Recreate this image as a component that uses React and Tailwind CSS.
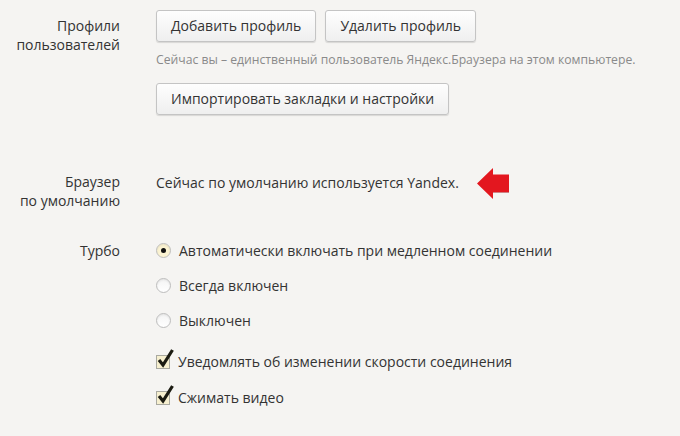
import React from "react";

const font = { fontFamily: '"Open Sans", "Noto Sans", sans-serif' };

function Btn({ children }) {
  return (
    <button className="h-[32px] px-[14px] rounded-[3px] border border-[#c4c4c4] bg-gradient-to-b from-[#fefefe] to-[#efefef] shadow-[0_1px_1px_rgba(0,0,0,0.12)] text-[14px] text-[#333] leading-none">
      {children}
    </button>
  );
}

function Radio({ checked }) {
  return (
    <span
      className={
        "w-[15px] h-[15px] rounded-full border border-[#bdbdbd] flex items-center justify-center shrink-0 shadow-[inset_0_1px_2px_rgba(0,0,0,0.08)] " +
        (checked ? "bg-[#fbf3d2]" : "bg-gradient-to-b from-[#f4f4f4] to-[#ffffff]")
      }
    >
      {checked && <span className="w-[5px] h-[5px] rounded-full bg-[#111]" />}
    </span>
  );
}

function Check() {
  return (
    <span className="relative w-[15px] h-[15px] shrink-0">
      <span className="absolute left-0 top-[1px] w-[14px] h-[14px] border border-[#a9a9a0] bg-[#f6efcf]" />
      <svg className="absolute left-[1px] top-[-6px]" width="17" height="20" viewBox="0 0 17 20">
        <path d="M2 12 L6 17 L15.5 2" fill="none" stroke="#1b1b12" strokeWidth="3.2" strokeLinejoin="miter" />
      </svg>
    </span>
  );
}

export default function App() {
  return (
    <div className="w-[680px] h-[436px] bg-[#f5f4f2] text-[#333] overflow-hidden" style={font}>
      <div className="grid grid-cols-[120px_1fr] gap-x-[36px] pt-[10px]">
        {/* Profiles */}
        <div className="text-right text-[14px] leading-[19px] pt-[6px] text-[#333]">
          Профили
          <br />
          пользователей
        </div>
        <div className="flex flex-col items-start">
          <div className="flex gap-[9px]">
            <Btn>Добавить профиль</Btn>
            <Btn>Удалить профиль</Btn>
          </div>
          <div className="mt-[10px] text-[12.2px] leading-[16px] text-[#8a8a8a]">
            Сейчас вы – единственный пользователь Яндекс.Браузера на этом компьютере.
          </div>
          <div className="mt-[15px]">
            <Btn>Импортировать закладки и настройки</Btn>
          </div>
        </div>

        {/* Default browser */}
        <div className="text-right text-[14px] leading-[19px] mt-[57px]">
          Браузер
          <br />
          по умолчанию
        </div>
        <div className="mt-[57px] flex items-start">
          <span className="text-[14px] leading-[19px] pt-[1px]">Сейчас по умолчанию используется Yandex.</span>
          <svg className="ml-[18px] mt-[-4px]" width="33" height="32" viewBox="0 0 33 32">
            <polygon points="0,15.5 16,0 16,6.5 32,6.5 32,24 16,24 16,31" fill="#e3171f" />
            <polygon points="16,24 32,24 32,25 16,25 16,31" fill="#a51016" opacity="0.5" />
          </svg>
        </div>

        {/* Turbo */}
        <div className="text-right text-[14px] leading-[19px] mt-[31px]">Турбо</div>
        <div className="mt-[23px] flex flex-col text-[14px]">
          <div className="h-[35px] flex items-center gap-[8px]">
            <Radio checked />
            <span>Автоматически включать при медленном соединении</span>
          </div>
          <div className="h-[35px] flex items-center gap-[8px]">
            <Radio />
            <span>Всегда включен</span>
          </div>
          <div className="h-[35px] flex items-center gap-[8px]">
            <Radio />
            <span>Выключен</span>
          </div>
          <div className="h-[36px] mt-[5px] flex items-center gap-[7px]">
            <Check />
            <span>Уведомлять об изменении скорости соединения</span>
          </div>
          <div className="h-[36px] flex items-center gap-[7px]">
            <Check />
            <span>Сжимать видео</span>
          </div>
        </div>
      </div>
    </div>
  );
}
